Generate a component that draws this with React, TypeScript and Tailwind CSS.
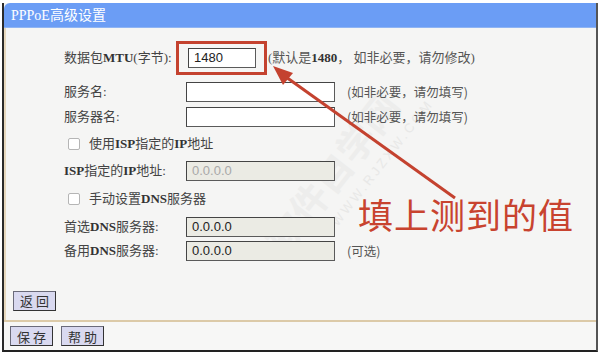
import React from 'react';

const FONT = "font-['Liberation_Serif','Noto_Sans_CJK_SC',serif]";

const Latin: React.FC<{ children: React.ReactNode }> = ({ children }) => (
  <span className="font-bold text-[#333]">{children}</span>
);

const TextBox: React.FC<{ value?: string; width: string; disabled?: boolean; muted?: boolean }> = ({
  value = '',
  width,
  disabled,
  muted,
}) => (
  <div
    className={`${width} h-[20px] flex items-center pl-[5px] border border-[#5a5a5a] border-t-[#444] border-l-[#444] text-[13px] font-['Liberation_Sans','Noto_Sans_CJK_SC',sans-serif] ${
      disabled ? 'bg-[#ebebe4]' : 'bg-white'
    } ${muted ? 'text-[#a8a8a8]' : 'text-[#222]'}`}
  >
    {value}
  </div>
);

const Hint: React.FC<{ children: React.ReactNode }> = ({ children }) => (
  <span className="ml-[12px] text-[12.5px] text-[#555] font-['Noto_Sans_CJK_SC',sans-serif]">{children}</span>
);

const Label: React.FC<{ children: React.ReactNode; w?: string }> = ({ children, w = 'w-[122px]' }) => (
  <div className={`${w} shrink-0 text-[13px] text-[#444]`}>{children}</div>
);

const Check: React.FC<{ children: React.ReactNode }> = ({ children }) => (
  <div className="flex items-center pl-[4px] gap-[9px] text-[13px] text-[#444]">
    <span className="w-[12px] h-[12px] border border-[#b5b5b5] bg-white rounded-[2px]" />
    <span>{children}</span>
  </div>
);

const Btn: React.FC<{ children: React.ReactNode }> = ({ children }) => (
  <button className="h-[20px] w-[43px] pl-[3px] bg-[#d9d9f0] border border-[#6a6a7a] border-b-[#333] border-r-[#333] text-[13px] text-[#333] tracking-[3px] leading-none font-['Noto_Sans_CJK_SC',sans-serif]">
    {children}
  </button>
);

export default function App() {
  return (
    <div className={`w-[600px] h-[353px] bg-white pt-[3px] ${FONT}`}>
      <div className="relative h-[349px] mx-[2px] border-l-2 border-r-2 border-b-2 border-l-[#2a2a2a] border-r-[#555] border-b-[#222] bg-[#f5f5f4] flex flex-col overflow-hidden">
        {/* watermark, behind the form */}
        <div className="absolute left-[232px] top-[140px] -rotate-[52deg] text-[38px] font-bold text-[#ededec] font-['Noto_Sans_CJK_SC',sans-serif] pointer-events-none select-none">
          软件自学网
        </div>
        <div className="absolute left-[300px] top-[150px] -rotate-[52deg] text-[13px] tracking-[3px] text-[#e8e8e7] font-['Liberation_Sans',sans-serif] pointer-events-none select-none">
          WWW.RJZXW.COM
        </div>

        <div className="relative h-[25px] shrink-0 bg-[#6b9df5] rounded-tl-[6px] border-b border-[#8fb4f3] flex items-center pl-[7px] text-white text-[14px]">
          PPPoE高级设置
        </div>

        <div className="relative flex-1 flex flex-col pl-[58px] border-l-2 border-[#e7d8bd]">
          <div className="mt-[13px] h-[34px] flex items-center">
            <Label w="w-[112px]">
              数据包<Latin>MTU</Latin>(字节):
            </Label>
            <div className="h-[34px] border-[3px] border-[#c4422f] pl-[9px] pr-[8px] flex items-center">
              <TextBox value="1480" width="w-[68px]" />
            </div>
            <span className="ml-[1px] text-[13px] text-[#555]">
              (默认是<Latin>1480</Latin>， 如非必要，请勿修改)
            </span>
          </div>

          <div className="mt-[5px] h-[24px] flex items-center">
            <Label>服务名:</Label>
            <TextBox width="w-[149px]" />
            <Hint>(如非必要，请勿填写)</Hint>
          </div>
          <div className="h-[26px] flex items-center">
            <Label>服务器名:</Label>
            <TextBox width="w-[149px]" />
            <Hint>(如非必要，请勿填写)</Hint>
          </div>
          <div className="h-[28px] flex items-center">
            <Check>
              使用<Latin>ISP</Latin>指定的<Latin>IP</Latin>地址
            </Check>
          </div>
          <div className="h-[26px] flex items-center">
            <Label>
              <Latin>ISP</Latin>指定的<Latin>IP</Latin>地址:
            </Label>
            <TextBox value="0.0.0.0" width="w-[149px]" disabled muted />
          </div>
          <div className="h-[30px] flex items-center">
            <Check>
              手动设置<Latin>DNS</Latin>服务器
            </Check>
          </div>
          <div className="h-[25px] flex items-center">
            <Label>
              首选<Latin>DNS</Latin>服务器:
            </Label>
            <TextBox value="0.0.0.0" width="w-[149px]" disabled />
          </div>
          <div className="h-[24px] flex items-center">
            <Label>
              备用<Latin>DNS</Latin>服务器:
            </Label>
            <TextBox value="0.0.0.0" width="w-[149px]" disabled />
            <Hint>(可选)</Hint>
          </div>

          <div className="mt-[26px] -ml-[51px]">
            <Btn>返回</Btn>
          </div>
        </div>

        <div className="relative h-[30px] shrink-0 border-t-2 border-[#dccaa8] flex items-center gap-[8px] pl-[6px] bg-[#f7f7f6]">
          <Btn>保存</Btn>
          <Btn>帮助</Btn>
        </div>

        {/* annotation */}
        <svg className="absolute left-0 top-0 pointer-events-none" width="600" height="353">
          <line x1="451" y1="195" x2="282" y2="74" stroke="#c4422f" strokeWidth="3" />
          <polygon points="269,63 279,82 289,70" fill="#c4422f" />
        </svg>
        <div className="absolute left-[354px] top-[193px] text-[35px] leading-none tracking-[1px] text-[#c8432f] font-['Noto_Sans_CJK_SC',sans-serif]">
          填上测到的值
        </div>
      </div>
    </div>
  );
}
